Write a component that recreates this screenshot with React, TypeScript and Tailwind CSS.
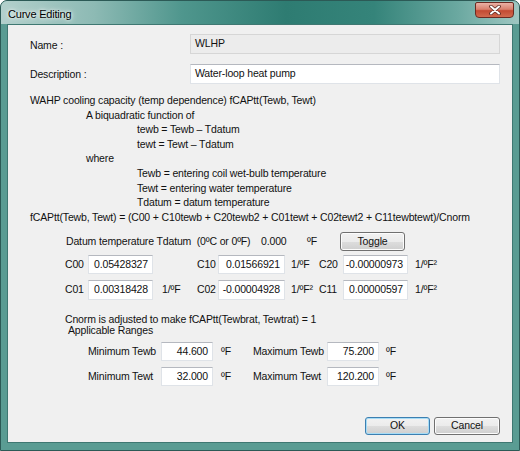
import React from 'react';

const Field = ({ w, value, align = 'right', grey = false }: { w: string; value: string; align?: 'left' | 'right'; grey?: boolean }) => (
  <div
    className={`${w} shrink-0 h-full flex items-center border ${
      grey
        ? 'bg-[#ececec] border-[#d6d6d6]'
        : 'bg-white border-[#dfe3e8] border-t-[#b5b8bf]'
    } ${align === 'right' ? 'justify-end pr-[4px]' : 'pl-[4px]'}`}
  >
    {value}
  </div>
);

const Button = ({ label, w, primary = false }: { label: string; w: string; primary?: boolean }) => (
  <div
    className={`${w} shrink-0 h-full flex items-center justify-center rounded-[3px] border ${
      primary ? 'border-[#3c7fb1] shadow-[inset_0_0_0_1px_#a6dcf6]' : 'border-[#707070] shadow-[inset_0_0_0_1px_#fcfcfc]'
    } bg-[linear-gradient(to_bottom,#f2f2f2_0%,#ebebeb_50%,#dddddd_51%,#cfcfcf_100%)]`}
  >
    {label}
  </div>
);

export default function App() {
  return (
    <div className="w-[520px] h-[451px] flex flex-col rounded-t-[7px] border border-[#2c5a56] bg-[#5a9c93] font-['Liberation_Sans',Arial,sans-serif] text-[10.5px] tracking-[-0.15px] text-[#111] whitespace-nowrap">
      {/* Title bar */}
      <div className="h-[23px] flex items-start justify-between rounded-t-[6px] bg-[linear-gradient(to_right,#b3d0cc_0%,#8dbab4_18%,#4f968d_35%,#2e7c72_55%,#35847a_72%,#6aa8a0_88%,#9fc7c2_100%)]">
        <span className="pl-[7px] pt-[5px] text-[11px] tracking-[-0.2px] text-black [text-shadow:0_0_6px_#ffffff,0_0_3px_#ffffff]">Curve Editing</span>
        <div className="mr-[5px] mt-[1px] w-[39px] h-[16px] rounded-b-[4px] rounded-t-[2px] border border-[#6b2a22] bg-[linear-gradient(to_bottom,#eab1a5_0%,#d9806d_45%,#c34a32_55%,#d16a4f_100%)] flex items-center justify-center">
          <svg width="12" height="10" viewBox="0 0 12 10">
            <path d="M2 1.5 L10 8.5 M10 1.5 L2 8.5" stroke="#5a2a22" strokeWidth="3.6" strokeLinecap="round" />
            <path d="M2 1.5 L10 8.5 M10 1.5 L2 8.5" stroke="#ffffff" strokeWidth="2" strokeLinecap="round" />
          </svg>
        </div>
      </div>

      {/* Client area */}
      <div className="mx-[6px] h-[419px] border border-[#3f7872] bg-[#f0f0f0] flex flex-col pl-[22px]">
        <div className="mt-[9px] h-[20px] flex items-center">
          <span className="w-[160px] shrink-0 pt-[3px]">Name :</span>
          <Field w="w-[310px]" value="WLHP" align="left" grey />
        </div>
        <div className="mt-[10px] h-[20px] flex items-center">
          <span className="w-[160px] shrink-0 pt-[1px]">Description :</span>
          <Field w="w-[310px]" value="Water-loop heat pump" align="left" />
        </div>

        <div className="mt-[9px] leading-[14.6px] flex flex-col">
          <span>WAHP cooling capacity (temp dependence) fCAPtt(Tewb, Tewt)</span>
          <span className="pl-[56px]">A biquadratic function of</span>
          <span className="pl-[107px]">tewb = Tewb – Tdatum</span>
          <span className="pl-[107px]">tewt = Tewt – Tdatum</span>
          <span className="pl-[56px]">where</span>
          <span className="pl-[107px]">Tewb = entering coil wet-bulb temperature</span>
          <span className="pl-[107px]">Tewt = entering water temperature</span>
          <span className="pl-[107px]">Tdatum = datum temperature</span>
          <span>fCAPtt(Tewb, Tewt) = (C00 + C10tewb + C20tewb2 + C01tewt + C02tewt2 + C11tewbtewt)/Cnorm</span>
        </div>

        <div className="mt-[8px] ml-[36px] h-[19px] flex items-center">
          <span className="w-[195px] shrink-0">Datum temperature Tdatum&nbsp; (0ºC or 0ºF)</span>
          <span className="w-[46px] shrink-0">0.000</span>
          <span className="w-[33px] shrink-0">ºF</span>
          <Button label="Toggle" w="w-[65px]" />
        </div>

        <div className="mt-[4px] ml-[35px] h-[19px] flex items-center">
          <span className="w-[23px] shrink-0">C00</span>
          <Field w="w-[65px]" value="0.05428327" />
          <span className="w-[44px] shrink-0"></span>
          <span className="w-[21px] shrink-0">C10</span>
          <Field w="w-[67px]" value="0.01566921" />
          <span className="w-[34px] shrink-0 pl-[6px]">1/ºF</span>
          <span className="w-[24px] shrink-0">C20</span>
          <Field w="w-[65px]" value="-0.00000973" />
          <span className="pl-[7px]">1/ºF²</span>
        </div>

        <div className="mt-[6px] ml-[35px] h-[20px] flex items-center">
          <span className="w-[23px] shrink-0">C01</span>
          <Field w="w-[65px]" value="0.00318428" />
          <span className="w-[44px] shrink-0 pl-[9px]">1/ºF</span>
          <span className="w-[21px] shrink-0">C02</span>
          <Field w="w-[67px]" value="-0.00004928" />
          <span className="w-[34px] shrink-0 pl-[6px]">1/ºF²</span>
          <span className="w-[24px] shrink-0">C11</span>
          <Field w="w-[65px]" value="0.00000597" />
          <span className="pl-[7px]">1/ºF²</span>
        </div>

        <div className="mt-[14px] ml-[35px] leading-[11px] flex flex-col">
          <span>Cnorm is adjusted to make fCAPtt(Tewbrat, Tewtrat) = 1</span>
          <span className="pl-[3px]">Applicable Ranges</span>
        </div>

        <div className="mt-[6px] ml-[58px] h-[19px] flex items-center">
          <span className="w-[73px] shrink-0">Minimum Tewb</span>
          <Field w="w-[52px]" value="44.600" />
          <span className="w-[40px] shrink-0 pl-[8px]">ºF</span>
          <span className="w-[74px] shrink-0">Maximum Tewb</span>
          <Field w="w-[52px]" value="75.200" />
          <span className="pl-[7px]">ºF</span>
        </div>

        <div className="mt-[6px] ml-[58px] h-[19px] flex items-center">
          <span className="w-[73px] shrink-0">Minimum Tewt</span>
          <Field w="w-[52px]" value="32.000" />
          <span className="w-[40px] shrink-0 pl-[8px]">ºF</span>
          <span className="w-[74px] shrink-0">Maximum Tewt</span>
          <Field w="w-[52px]" value="120.200" />
          <span className="pl-[7px]">ºF</span>
        </div>

        <div className="mt-[31px] mr-[12px] h-[18px] flex justify-end gap-[4px]">
          <Button label="OK" w="w-[65px]" primary />
          <Button label="Cancel" w="w-[66px]" />
        </div>
      </div>
    </div>
  );
}
